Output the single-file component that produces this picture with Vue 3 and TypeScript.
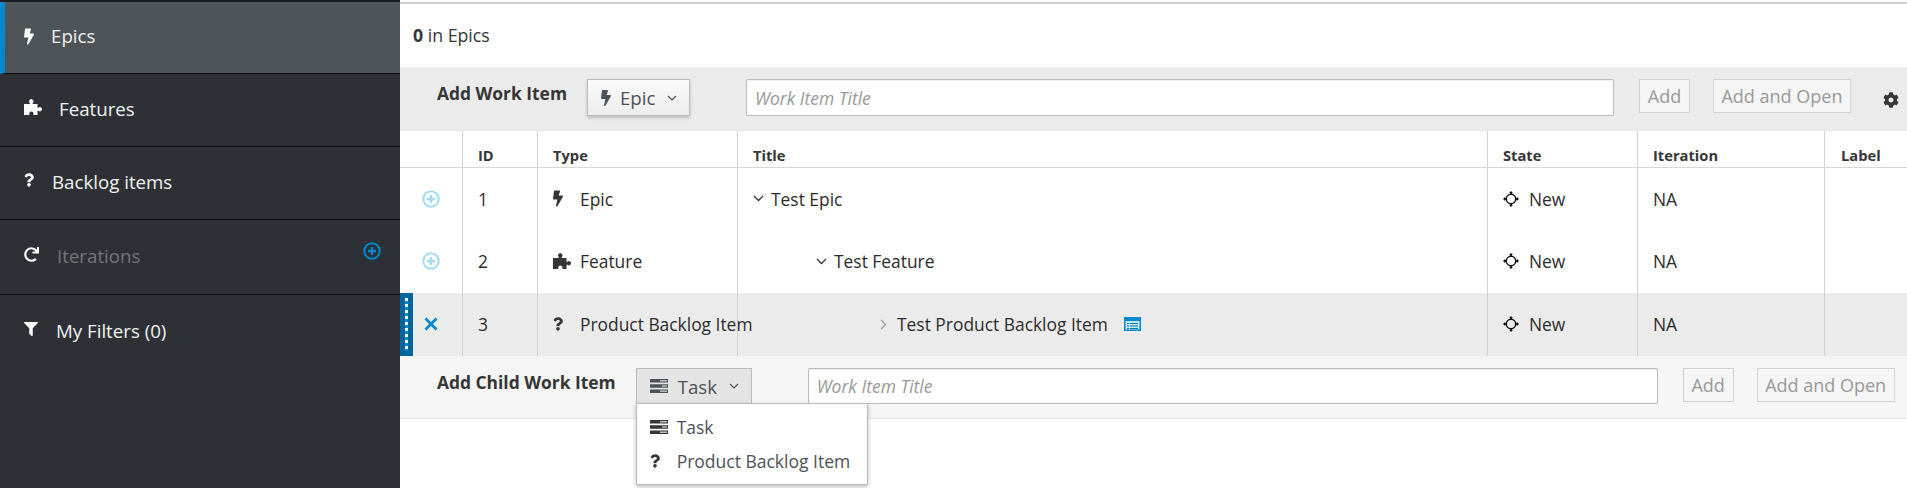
<script setup lang="ts">
const navItems = [
  { label: 'Epics', icon: 'bolt', active: true, gap: 17, nudge: 1 },
  { label: 'Features', icon: 'puzzle', gap: 17, nudge: -3 },
  { label: 'Backlog items', icon: 'question', gap: 18, nudge: -2 },
  { label: 'Iterations', icon: 'refresh', muted: true, gap: 18, nudge: -3 },
  { label: 'My Filters (0)', icon: 'filter', gap: 18, nudge: -3 },
];

const paths: { [key: string]: { box: string; d: string } } = {
  bolt: {
    box: '0 0 320 512',
    d: 'M296 160H180.6l42.6-129.8C227.2 15 215.7 0 200 0H56C44 0 33.8 8.9 32.2 20.8l-32 240C-1.7 275.2 9.5 288 24 288h118.7L96.6 482.5c-3.6 15.2 8 29.5 23.3 29.5 8.4 0 16.4-4.4 20.8-12l176-304c9.3-15.9-2.2-36-20.7-36z',
  },
  puzzle: {
    box: '0 0 18 16',
    d: 'M0 5h5.800v-.900a2.200 2.200 0 1 1 2.900 0V5h4.800v3.800h.900a2.100 2.100 0 1 1 0 3h-.900V16H9.500v-1.500a2.100 2.100 0 0 0-4.200 0V16H0z',
  },
  question: {
    box: '0 0 384 512',
    d: 'M202.021 0C122.202 0 70.503 32.703 29.914 91.026c-7.363 10.58-5.093 25.086 5.178 32.874l43.138 32.709c10.373 7.865 25.132 6.026 33.253-4.148 25.049-31.381 43.63-49.449 82.757-49.449 30.764 0 68.816 19.799 68.816 49.631 0 22.552-18.617 34.134-48.993 51.164-35.423 19.86-82.299 44.576-82.299 106.405V320c0 13.255 10.745 24 24 24h72.471c13.255 0 24-10.745 24-24v-5.773c0-42.86 125.268-44.645 125.268-160.627C377.504 66.256 286.902 0 202.021 0zM192 373.459c-38.196 0-69.271 31.075-69.271 69.271 0 38.195 31.075 69.27 69.271 69.27s69.271-31.075 69.271-69.271-31.075-69.27-69.271-69.27z',
  },
  refresh: {
    box: '0 0 512 512',
    d: 'M500.33 0h-47.41a12 12 0 0 0-12 12.57l4 82.76A247.42 247.42 0 0 0 256 8C119.34 8 8.9 119.53 8 256.19 7.1 393.07 118.08 504 256 504a247.1 247.1 0 0 0 166.18-63.91 12 12 0 0 0 .48-17.43l-34-34a12 12 0 0 0-16.38-.55A176 176 0 1 1 402.1 157.8l-101.53-4.87a12 12 0 0 0-12.57 12v47.41a12 12 0 0 0 12 12h200.33a12 12 0 0 0 12-12V12a12 12 0 0 0-12-12z',
  },
  filter: {
    box: '0 0 512 512',
    d: 'M487.976 0H24.028C2.71 0-8.047 25.866 7.058 40.971L192 225.941V432c0 7.831 3.821 15.17 10.237 19.662l80 55.98C298.02 518.69 320 507.493 320 487.98V225.941l184.947-184.97C520.021 25.896 509.338 0 487.976 0z',
  },
  cog: {
    box: '0 0 512 512',
    d: 'M487.4 315.7l-42.6-24.6c4.3-23.2 4.3-47 0-70.2l42.6-24.6c4.9-2.8 7.1-8.6 5.5-14-11.1-35.6-30-67.8-54.7-94.6-3.8-4.1-10-5.1-14.8-2.3L380.8 110c-17.9-15.4-38.5-27.3-60.8-35.1V25.8c0-5.6-3.9-10.5-9.4-11.7-36.7-8.2-74.3-7.8-109.2 0-5.5 1.2-9.4 6.1-9.4 11.7V75c-22.2 7.9-42.8 19.8-60.8 35.1L88.7 85.5c-4.9-2.8-11-1.9-14.8 2.3-24.7 26.7-43.6 58.9-54.7 94.6-1.7 5.4.6 11.2 5.5 14L67.3 221c-4.3 23.2-4.3 47 0 70.2l-42.6 24.6c-4.9 2.8-7.1 8.6-5.5 14 11.1 35.6 30 67.8 54.7 94.6 3.8 4.1 10 5.1 14.8 2.3l42.6-24.6c17.9 15.4 38.5 27.3 60.8 35.1v49.2c0 5.6 3.9 10.5 9.4 11.7 36.7 8.2 74.3 7.8 109.2 0 5.5-1.2 9.4-6.1 9.4-11.7v-49.2c22.2-7.9 42.8-19.8 60.8-35.1l42.6 24.6c4.9 2.8 11 1.9 14.8-2.3 24.7-26.7 43.6-58.9 54.7-94.6 1.5-5.5-.7-11.3-5.6-14.1zM256 336c-44.1 0-80-35.9-80-80s35.9-80 80-80 80 35.9 80 80-35.9 80-80 80z',
  },
};

const iconSize: { [key: string]: number[] } = {
  bolt: [10, 17],
  puzzle: [18, 16],
  question: [10, 14],
  refresh: [15, 15],
  filter: [14, 14],
};

const rows = [
  { id: 1, type: 'Epic', icon: 'bolt', title: 'Test Epic', indent: 0, open: true },
  { id: 2, type: 'Feature', icon: 'puzzle', title: 'Test Feature', indent: 63, open: true },
  { id: 3, type: 'Product Backlog Item', icon: 'question', title: 'Test Product Backlog Item', indent: 125, open: false, selected: true },
];

const columns = ['', 'ID', 'Type', 'Title', 'State', 'Iteration', 'Label'];
</script>

<template>
  <div class="page">
    <aside class="sidebar">
      <div
        v-for="item in navItems"
        :key="item.label"
        class="nav-item"
        :class="{ active: item.active, muted: item.muted }"
      >
        <span
          class="nav-icon"
          :style="{ width: iconSize[item.icon][0] + 'px', marginRight: item.gap + 'px', marginTop: item.nudge + 'px' }"
        >
          <svg :width="iconSize[item.icon][0]" :height="iconSize[item.icon][1]" :viewBox="paths[item.icon].box">
            <path :d="paths[item.icon].d" fill="#fff" />
          </svg>
        </span>
        <span class="nav-label">{{ item.label }}</span>
        <svg v-if="item.muted" class="nav-add" width="18" height="18" viewBox="0 0 18 18">
          <circle cx="9" cy="9" r="7.7" fill="none" stroke="#0088ce" stroke-width="2" />
          <path d="M9 5v8M5 9h8" stroke="#0088ce" stroke-width="2.400" />
        </svg>
      </div>
    </aside>

    <main class="content">
      <div class="count"><b>0</b> in Epics</div>

      <div class="quick-add top">
        <span class="qa-label">Add Work Item</span>
        <button class="type-btn epic" type="button">
          <svg width="10" height="16" :viewBox="paths.bolt.box"><path :d="paths.bolt.d" fill="#4d5258" /></svg>
          <span>Epic</span>
          <svg class="chev" width="10" height="6" viewBox="0 0 10 6"><path d="M1 1l4 4 4-4" fill="none" stroke="#4d5258" stroke-width="1.200" /></svg>
        </button>
        <input class="title-input" type="text" placeholder="Work Item Title" />
        <button class="add-btn" type="button">Add</button>
        <button class="add-btn open" type="button">Add and Open</button>
        <svg class="cog" width="16" height="16" :viewBox="paths.cog.box"><path :d="paths.cog.d" fill="#363636" /></svg>
      </div>

      <div class="row head">
        <div v-for="col in columns" :key="col" class="cell">{{ col }}</div>
      </div>

      <div v-for="row in rows" :key="row.id" class="row item" :class="{ selected: row.selected }">
        <div class="cell toggle">
          <div v-if="row.selected" class="handle"></div>
          <svg v-if="row.selected" class="close" width="14" height="14" viewBox="0 0 14 14">
            <path d="M1.500 1.500l11 11M12.500 1.500l-11 11" stroke="#0088ce" stroke-width="2.800" />
          </svg>
          <svg v-else width="18" height="18" viewBox="0 0 18 18">
            <circle cx="9" cy="9" r="7.700" fill="none" stroke="#a3dbf3" stroke-width="2" />
            <path d="M9 5v8M5 9h8" stroke="#a3dbf3" stroke-width="2.400" />
          </svg>
        </div>
        <div class="cell">{{ row.id }}</div>
        <div class="cell type">
          <span class="type-icon">
            <svg :width="iconSize[row.icon][0]" :height="iconSize[row.icon][1]" :viewBox="paths[row.icon].box">
              <path :d="paths[row.icon].d" fill="#363636" />
            </svg>
          </span>
          <span class="type-name">{{ row.type }}</span>
        </div>
        <div class="cell title" :style="{ paddingLeft: 15 + row.indent + 'px' }">
          <svg v-if="row.open" class="tree" width="11" height="7" viewBox="0 0 11 7">
            <path d="M1 1l4.500 4.500L10 1" fill="none" stroke="#363636" stroke-width="1.300" />
          </svg>
          <svg v-else class="tree" width="7" height="11" viewBox="0 0 7 11">
            <path d="M1 1l4.500 4.500L1 10" fill="none" stroke="#9c9c9c" stroke-width="1.300" />
          </svg>
          <span>{{ row.title }}</span>
          <svg v-if="row.selected" class="detail" width="17" height="14" viewBox="0 0 17 14">
            <rect x=".75" y=".75" width="15.500" height="12.500" fill="#c4e6f6" stroke="#0088ce" stroke-width="1.500" />
            <rect x="1" y="1" width="15" height="3" fill="#0088ce" />
            <path d="M3 6.500h2M6 6.500h8M3 9h2M6 9h8M3 11.500h2M6 11.500h8" stroke="#0077b3" />
          </svg>
        </div>
        <div class="cell state">
          <svg width="16" height="16" viewBox="0 0 16 16">
            <circle cx="8" cy="8" r="4.700" fill="none" stroke="#111" stroke-width="1.500" />
            <path d="M8 0l1.700 1.800L8 3.600 6.300 1.800zM8 12.400l1.700 1.800L8 16l-1.700-1.800zM0 8l1.800-1.700L3.600 8l-1.800 1.700zM12.400 8l1.800-1.700L16 8l-1.800 1.700z" fill="#111" />
          </svg>
          <span>New</span>
        </div>
        <div class="cell">NA</div>
        <div class="cell"></div>
      </div>

      <div class="quick-add child">
        <span class="qa-label">Add Child Work Item</span>
        <div class="type-wrap">
          <button class="type-btn task" type="button">
            <svg width="18" height="14" viewBox="0 0 18 14">
              <path d="M0 0h18v3.500H0zM0 5.200h18v3.500H0zM0 10.500h18V14H0z" fill="#4d5258" />
              <path d="M10 1h7v1.500h-7zM12 6.200h5v1.500h-5zM10 11.500h7V13h-7z" fill="#bbb" />
            </svg>
            <span>Task</span>
            <svg class="chev" width="10" height="6" viewBox="0 0 10 6"><path d="M1 1l4 4 4-4" fill="none" stroke="#4d5258" stroke-width="1.200" /></svg>
          </button>
          <ul class="menu">
            <li>
              <span class="menu-icon">
                <svg width="18" height="14" viewBox="0 0 18 14">
                  <path d="M0 0h18v3.500H0zM0 5.200h18v3.500H0zM0 10.500h18V14H0z" fill="#363636" />
                  <path d="M10 1h7v1.500h-7zM12 6.200h5v1.500h-5zM10 11.500h7V13h-7z" fill="#bbb" />
                </svg>
              </span>
              Task
            </li>
            <li>
              <span class="menu-icon">
                <svg width="10" height="14" :viewBox="paths.question.box"><path :d="paths.question.d" fill="#363636" /></svg>
              </span>
              Product Backlog Item
            </li>
          </ul>
        </div>
        <input class="title-input" type="text" placeholder="Work Item Title" />
        <button class="add-btn" type="button">Add</button>
        <button class="add-btn open" type="button">Add and Open</button>
      </div>
    </main>
  </div>
</template>

<style>
html,
body {
  margin: 0;
  background: #fff;
  overflow: hidden;
}
</style>

<style scoped>
.page {
  display: flex;
  width: 1907px;
  height: 488px;
  overflow: hidden;
  font-family: 'Open Sans', sans-serif;
  color: #363636;
}

.sidebar {
  width: 400px;
  flex: none;
  background: #2d3135;
  border-top: 2px solid #1a1c1e;
  box-sizing: border-box;
}

.nav-item {
  display: flex;
  align-items: center;
  height: 73px;
  padding: 0 19px 4px 24px;
  box-sizing: border-box;
  border-bottom: 1px solid #0c0d0e;
  font-size: 18.700px;
  color: #f1f1f1;
  position: relative;
}

.nav-item.active {
  height: 72px;
  background: linear-gradient(#505559, #4d5257);
  border-left: 5px solid #0088ce;
  padding-left: 19px;
}

.nav-item.muted {
  height: 75px;
  padding-bottom: 3px;
  color: #72767a;
}

.nav-item:last-child {
  border-bottom: none;
  height: 75px;
}

.nav-icon {
  display: flex;
  justify-content: center;
  flex: none;
}

.nav-add {
  margin-left: auto;
  margin-top: -9px;
}

.content {
  flex: 1;
  min-width: 0;
  border-top: 2px solid #fff;
}

.count {
  height: 65px;
  box-sizing: border-box;
  border-top: 2px solid #d1d1d1;
  padding: 19px 0 0 13px;
  font-size: 17.700px;
  line-height: 24px;
}

.quick-add {
  display: flex;
  align-items: flex-start;
  box-sizing: border-box;
  padding-left: 37px;
}

.quick-add.top {
  height: 64px;
  padding-top: 12px;
  background: #ebebeb;
}

.quick-add.child {
  height: 63px;
  padding-top: 12px;
  background: #f5f5f5;
  border-bottom: 1px solid #e4e4e4;
}

.qa-label {
  font-size: 17.400px;
  font-weight: 700;
  line-height: 28px;
  white-space: nowrap;
}

.type-btn {
  display: flex;
  align-items: center;
  box-sizing: border-box;
  border: 1px solid #bbb;
  font-family: inherit;
  font-size: 18.700px;
  color: #4d5258;
  font-weight: 500;
  padding: 0;
}

.type-btn.epic {
  width: 103px;
  height: 37px;
  margin-left: 20px;
  padding-left: 13px;
  background: linear-gradient(#fafafa, #ededed);
  box-shadow: 0 2px 3px rgba(0, 0, 0, 0.2);
}

.type-btn.epic span {
  margin-left: 9px;
}

.type-btn.epic + .title-input {
  width: 868px;
  margin-left: 56px;
}

.type-wrap {
  position: relative;
  margin-left: 20px;
}

.type-btn.task {
  width: 116px;
  height: 36px;
  padding-left: 13px;
  background: #e4e4e4;
}

.type-btn.task span {
  margin-left: 10px;
}

.chev {
  margin-left: 12px;
}

.menu {
  position: absolute;
  top: 35px;
  left: 0;
  width: 232px;
  height: 82px;
  margin: 0;
  padding: 6px 0;
  box-sizing: border-box;
  list-style: none;
  background: #fff;
  border: 1px solid #bbb;
  box-shadow: 0 2px 4px rgba(0, 0, 0, 0.25);
  font-size: 17.500px;
  color: #4d5258;
}

.menu li {
  display: flex;
  align-items: center;
  height: 34px;
  padding-left: 13px;
  white-space: nowrap;
}

.menu-icon {
  display: flex;
  flex: none;
  width: 18px;
  margin-right: 9px;
}

.title-input {
  box-sizing: border-box;
  height: 37px;
  padding: 0 8px;
  border: 1px solid #bbb;
  border-radius: 1px;
  background: #fff;
  box-shadow: inset 0 1px 1px rgba(0, 0, 0, 0.08);
  font-family: inherit;
  font-size: 17.500px;
  outline: none;
}

.title-input::placeholder {
  color: #999;
  font-style: italic;
  opacity: 1;
}

.child .title-input {
  width: 850px;
  height: 36px;
  margin-left: 56px;
}

.add-btn {
  box-sizing: border-box;
  width: 51px;
  height: 34px;
  margin-left: 25px;
  padding: 0;
  border: 1px solid #d1d1d1;
  background: #f5f5f5;
  color: #999;
  font-family: inherit;
  font-size: 18px;
  font-weight: 500;
}

.add-btn.open {
  width: 138px;
  margin-left: 23px;
}

.cog {
  margin: 13px 0 0 32px;
}

.row {
  display: grid;
  grid-template-columns: 63px 75px 200px 750px 150px 187px 82px;
}

.cell {
  display: flex;
  align-items: center;
  box-sizing: border-box;
  padding-left: 15px;
  border-right: 1px solid #d1d1d1;
  white-space: nowrap;
  min-width: 0;
}

.cell:last-child {
  border-right: none;
  padding-left: 16px;
}

.row.head {
  height: 37px;
  border-bottom: 1px solid #d8d8d8;
  box-sizing: border-box;
  font-size: 14.700px;
  font-weight: 700;
}

.row.head .cell {
  padding-top: 11px;
}

.row.item {
  height: 63px;
  font-size: 17.400px;
  color: #2b2b2b;
}

.row.head + .row.item {
  height: 62px;
}

.row.item .cell {
  padding-bottom: 1px;
}

.row.selected {
  background: #ebebeb;
}

.toggle {
  position: relative;
  padding-left: 22px !important;
}

.close {
  margin-left: 2px;
}

.handle {
  position: absolute;
  left: 0;
  top: 0;
  bottom: 0;
  width: 13px;
  background:
    repeating-linear-gradient(#fff 0 3px, #0088ce 3px 6px) 5px 5px / 3px 53px no-repeat,
    #00659c;
}

.type-icon {
  display: flex;
  flex: none;
  width: 18px;
  margin-right: 9px;
}

.tree {
  margin-right: 7px;
  flex: none;
}

.row.selected .tree {
  margin-left: 2px;
  margin-right: 10px;
}

.detail {
  margin-left: 16px;
}

.state svg {
  margin-right: 10px;
}
</style>
